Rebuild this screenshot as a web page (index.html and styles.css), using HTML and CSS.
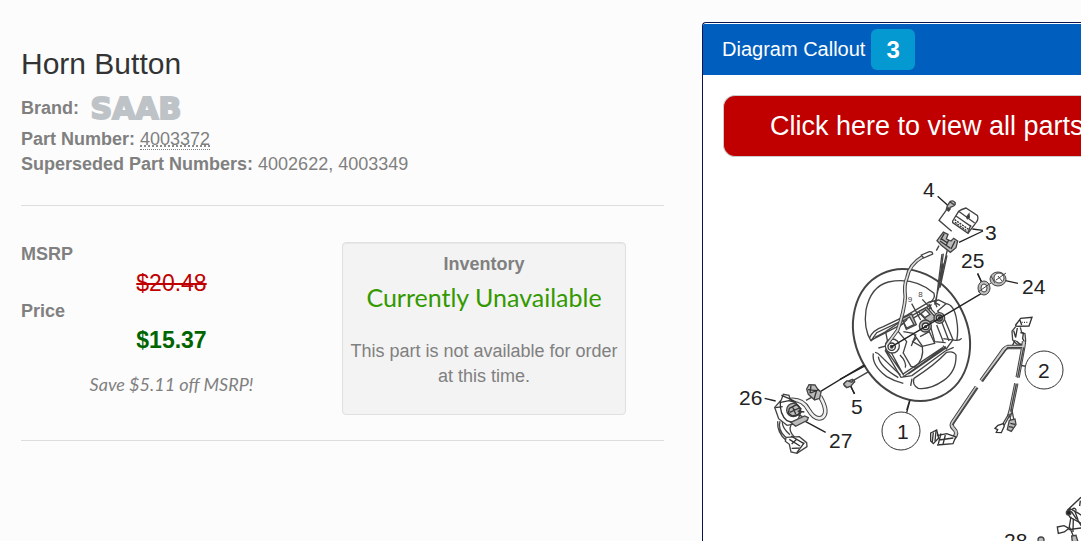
FILE: index.html
```html
<!DOCTYPE html>
<html lang="en">
<head>
    <meta charset="UTF-8">
    <meta name="viewport" content="width=device-width, initial-scale=1.0">
    <title>Horn Button - 4003372</title>
    <link rel="stylesheet" href="styles.css">
</head>
<body>
    <main class="page">
        <section class="product">
            <h1>Horn Button</h1>
            <div class="brand">
                <strong>Brand:</strong>
                <svg class="brand-logo" viewBox="0 0 98 36" role="img" aria-label="SAAB">
                    <text x="49" y="29" text-anchor="middle">SAAB</text>
                </svg>
            </div>
            <div><strong>Part Number:</strong> <abbr title="Part number">4003372</abbr></div>
            <div><strong>Superseded Part Numbers:</strong> 4002622, 4003349</div>
            <hr>
            <div class="offer">
                <div class="pricing">
                    <dl>
                        <dt>MSRP</dt>
                        <dd><del>$20.48</del></dd>
                        <dt>Price</dt>
                        <dd class="price">$15.37</dd>
                    </dl>
                    <p class="savings">Save $5.11 off MSRP!</p>
                </div>
                <div class="well">
                    <strong>Inventory</strong>
                    <div class="status">Currently Unavailable</div>
                    <p>This part is not available for order at this time.</p>
                </div>
            </div>
            <hr>
        </section>
        <section class="panel">
            <div class="panel-heading">Diagram Callout <span class="label">3</span></div>
            <div class="panel-body">
                <a class="btn" href="#diagram">Click here to view all parts</a>
                <svg class="diagram" id="diagram" viewBox="723 177 358 364" role="img" aria-label="Steering wheel parts diagram">
                    <!-- horn button, bracket and screw -->
                    <g transform="translate(900 170) scale(.3333)">
                        <path class="lead" d="M113 79L143 106M249 181L217 177M249 183L177 217M233 310L244 335M313 331L354 340"/>
                        <path d="M140 119L117 151L155 184M117 227L109 242"/>
                        <path class="grey" d="M142 107l9-13q8-4 14 3 3 7-4 11l-10 4-5 11-7-5z"/>
                        <path d="M150 96l12 8M142 112l10 6M140 116l9 5"/>
                        <path class="part" d="M158 153L176 124Q184 118 198 114L232 136Q237 148 228 158L204 190 158 158z"/>
                        <path d="M168 138l46 32M176 124l48 35M204 190l8-25"/>
                        <path class="thick" d="M164 149l43 30M165 157l38 27" stroke-dasharray="6 3"/>
                        <path class="ink" d="M200 141l7-9 1 10-6 4z"/>
                        <path class="grey" d="M111 212L130 186 144 193 139 207 153 213 161 205 173 213 168 233 151 247 124 226z"/>
                        <path class="thick" d="M122 205l21 14M120 213l31 22M133 190l-11 20M165 213l-12 24M139 225l7-15"/>
                        <path d="M130 251L115 360M141 256L120 353M130 280l-8 50"/>
                    </g>
                    <!-- steering wheel -->
                    <ellipse class="rim" cx="911.5" cy="335" rx="56" ry="68" transform="rotate(-26 911.5 335)"/>
                    <g transform="translate(840 250) scale(.3333)">
                        <path d="M93 273Q70 235 78 180Q92 110 145 96Q225 80 282 130Q287 145 270 158M93 273l10-10M318 161Q343 164 350 210Q356 245 350 273M365 265q-6 7-18 6l-37-5"/>
                        <path d="M100 310Q94 345 140 380Q165 395 190 400M105 307q8 0 16 10l60 58M115 320q4 30 60 63"/>
                        <path d="M222 385Q285 345 320 307Q340 302 348 315Q350 365 310 392Q270 420 235 415Q215 405 222 385zM216 386l-4 22"/>
                        <path d="M88 265Q98 240 130 230L200 196 268 156 296 150 318 161M93 273L110 248 205 203 275 164M98 268l110-57 66-38"/>
                        <path d="M105 262l32-17 8 41-30 8M137 245l43-29M145 286l-9 16 47 80 33-5 100-74 25-11M140 302l49 70 120-80M153 306l38 70M205 372l113-78M188 382l130-92"/>
                        <path d="M318 161l-25 22 22 28 24 58-20 28-10-10M305 215l22 58M240 260l28-15 16 35-40 10-26-15 12-12"/>
                        <path class="grey" d="M235 185l25-13 30 34-24 12zM186 205l29-13 14 32-30 14z"/>
                        <path class="part" d="M243 191l14-12 13 14-15 10zM189 213l20-12 13 23-22 10z"/>
                        <path d="M178 230l24-22M170 239l30 36-11 36M190 245l30 5 27 38q6 40-22 64l-12-3-23-40M180 315q20 20 16 38M228 253l-14 35M272 230l12 45 33 3M290 225l20 50M266 161l9 16M283 152l8 20M286 158l14 8"/>
                        <circle class="part" cx="157" cy="288" r="21"/>
                        <circle class="thick part" cx="155" cy="290" r="11"/><circle class="ink" cx="155" cy="290" r="4"/>
                        <circle class="grey" cx="256" cy="228" r="18"/>
                        <circle class="thick part" cx="257" cy="229" r="10"/><circle class="ink" cx="257" cy="230" r="3"/>
                        <circle class="grey" cx="298" cy="204" r="16"/>
                        <circle class="thick part" cx="298" cy="204" r="9"/><circle class="ink" cx="299" cy="204" r="4"/>
                        <path d="M215 161l27 49M247 148l39 43"/>
                        <path class="lead" d="M155 290L450 115M0 388L76 347M30 402l13 30M413 72l12 24"/>
                        <path d="M35 394L86 365M209 451l-9 29M322 0L284 164M306 12l-18 145"/>
                        <path class="tube" d="M248 20Q208 43 201 83Q191 105 196 140Q193 183 173 240L140 285"/>
                        <path class="tube-fill" d="M248 20Q208 43 201 83Q191 105 196 140Q193 183 173 240L140 285"/>
                        <path class="part" d="M244 15l24-10q10-1 10 7l-27 12z"/>
                        <path class="grey" d="M12 405q0-9 10-10l15-7 6 8-17 8-2 8q-8 2-12-7z"/>
                        <text class="tiny" x="203" y="157">9</text>
                        <text class="tiny" x="235" y="142">8</text>
                    </g>
                    <!-- washers 24 and 25 -->
                    <ellipse class="grey" cx="984" cy="288" rx="6" ry="7"/>
                    <ellipse class="part" cx="984" cy="288" rx="3" ry="4"/>
                    <path d="M978 292l13-9"/>
                    <ellipse class="grey" cx="998" cy="279" rx="8" ry="7"/>
                    <ellipse class="part" cx="999" cy="278" rx="5" ry="5"/>
                    <path d="M996 280l10-7M998 276l4 5M991 276l4 7"/>
                    <!-- clock spring -->
                    <g transform="translate(730 360) scale(.3333)">
                        <path class="lead" d="M272 94L402 15M104 115l33 8M226 184l61 33M361 78l13 23M530 158l10-37"/>
                        <path d="M228 121l22-12"/>
                        <path class="tube wide" d="M178 120Q217 115 235 148Q256 184 278 172Q297 155 270 109"/>
                        <path class="tube-fill wide" d="M178 120Q217 115 235 148Q256 184 278 172Q297 155 270 109"/>
                        <path class="grey" d="M230 87l7-13 18 1 8 12 10 10-4 18-15 5-19-17z"/>
                        <path class="thick" d="M234 89l26 3M242 99l25-10M243 76l-3 24M260 91l-8 27"/>
                        <path class="part" d="M134 142l20-22 6-17 17 3 4 14 15 5 17 31-14 35-28 5-25-20z"/>
                        <path class="thick" d="M136 143l22-3M151 123q-3 40 20 59l25 8M154 106l22 9 16 8M148 128l29-6 20 6"/>
                        <circle class="grey" cx="190" cy="150" r="20"/>
                        <path class="thick" d="M178 145l22-11 13 12-6 17-20 5-12-9zM187 139l10 23M179 157l29-13M203 153l20 3M203 164l15 6"/>
                        <path class="part" d="M150 184q-8 25 17 48M143 184q-2 34 25 57M183 195q-9 17 11 37l22 13M157 184q-1 21 23 40"/>
                        <path class="part" d="M168 232l40-2 22 18 1 12-30 20-18-4-5-23-12-9z"/>
                        <path class="thick" d="M183 228l39 23M178 238l32 20M185 252l15-14M200 279l23-31M185 265l27-1"/>
                        <path class="grey" d="M182 187l42-19 11 5-3 8-35 18z"/>
                        <path class="grey" d="M341 72l10-10 14 5 7-7 2 5-11 13-13 5z"/>
                    </g>
                    <!-- harness -->
                    <g transform="translate(920 300) scale(.3333)">
                        <path class="part thick" d="M287 75l15-20 34-3-9 26-39 1zM299 58l6 17"/>
                        <path class="thick" d="M305 67h20" stroke-dasharray="3 4"/>
                        <path class="part" d="M287 80l-11 14 2 26 12 12 19 1 8-10-2-22-10-4-4-15"/>
                        <path class="thick" d="M281 92l6 21M286 120l-10 19M289 123l20 17M301 98l9 2-2 16 9 16M292 84l-5 28"/>
                        <path class="cable" d="M309 141H263Q252 144 244 159L184 242M170 261L98 367Q91 378 102 387Q116 400 100 415L52 425M312 124L310 140 293 232M289 250L273 328L267 350"/>
                        <path class="cable-fill" d="M309 141H263Q252 144 244 159L184 242M170 261L98 367Q91 378 102 387Q116 400 100 415L52 425M312 124L310 140 293 232M289 250L273 328L267 350"/>
                        <path d="M307 143h-44L185 244M171 264L97 375M311 142l-18 91M289 252l-17 83"/>
                        <path class="lead" d="M306 197l13 2"/>
                        <path class="part thick" d="M32 399l18-9 6 24-16 17-8-8zM51 407l29-6 27 10-8 20-48 4"/>
                        <path class="thick" d="M40 397l-3 29M48 393l-3 30M63 400l-8 32M76 405l-7 28M57 420l43-6"/>
                        <path d="M266 342l-18 30M272 341l-19 34M275 326l7 36M269 344l4 21"/>
                        <path class="part thick" d="M250 371l-16 5-9 9 8 4-4 8 15 1 9-20z"/>
                        <path class="grey thick" d="M268 361l17-4 3 17-14 20-12-5z"/>
                        <path class="thick" d="M271 370l14 3M267 380l12 2"/>
                    </g>
                    <circle class="callout" cx="901" cy="431" r="19"/>
                    <circle class="callout" cx="1044" cy="370" r="19"/>
                    <!-- next assembly, cut off at the bottom -->
                    <g transform="translate(990 480) scale(.3333)">
                        <path class="part thick" d="M232 91L273 52M230 97l12-10 20 11 13 8M231 97l9 15 34 18M247 88q8-8 12 4"/>
                        <circle class="ink" cx="236" cy="98" r="7"/>
                        <path class="thick" d="M244 94l16 24M254 92l10 27M243 110l-5 30 15 35M250 116l-1 40M262 118l12 20M236 145l-14-4M236 149l37-5M271 62l-2 16"/>
                        <path class="part thick" d="M202 141l20-4 15 8-14 11-18 4z"/>
                        <path class="grey thick" d="M245 168l13-2 6 20h-17z"/>
                        <circle class="grey" cx="153" cy="180" r="9"/>
                    </g>
                    <g class="numbers">
                        <text x="923" y="197">4</text>
                        <text x="985" y="240">3</text>
                        <text x="961" y="268">25</text>
                        <text x="1022" y="294">24</text>
                        <text x="739" y="405">26</text>
                        <text x="851" y="414">5</text>
                        <text x="829" y="448">27</text>
                        <text x="897" y="439">1</text>
                        <text x="1038" y="378">2</text>
                        <text x="1004" y="548">28</text>
                    </g>
                </svg>
            </div>
        </section>
    </main>
</body>
</html>
```
FILE: styles.css
```css
* {
    box-sizing: border-box;
}
body {
    margin: 0;
    background-color: #fcfcfc;
    color: #808080;
    font-family: Arial, "Liberation Sans", sans-serif;
    font-size: 18px;
    line-height: 25px;
    overflow: hidden;
}
.page {
    display: grid;
    grid-template-columns: minmax(0, 702fr) minmax(0, 379fr);
    height: 100vh;
    padding-top: 22px;
}
.product {
    padding: 22px 38px 0 21px;
}
h1 {
    margin: 0 0 12px;
    color: #333;
    font-size: 30px;
    font-weight: normal;
    line-height: 40px;
}
.brand {
    display: flex;
    align-items: center;
    gap: 8px;
    height: 24px;
    margin-bottom: 7px;
}
.brand-logo {
    width: 98px;
    height: 36px;
}
.brand-logo text {
    fill: #bec3c7;
    stroke: #bec3c7;
    stroke-width: 2px;
    font-family: "DejaVu Sans", sans-serif;
    font-size: 30px;
    font-weight: bold;
}
abbr {
    border-bottom: 1px dotted #808080;
    text-decoration: underline dotted;
}
hr {
    height: 1px;
    margin: 28px 0 36px;
    border: 0;
    background-color: #ddd;
}
.offer {
    display: grid;
    grid-template-columns: 301fr 284fr;
    column-gap: 20px;
    padding-right: 38px;
    margin-bottom: -3px;
}
dl {
    margin: 0;
}
dt {
    font-weight: bold;
}
dd {
    margin: 0;
    color: #c00000;
    font-size: 23px;
    line-height: 32px;
    text-align: center;
}
.price {
    color: #006400;
    font-weight: bold;
}
.savings {
    margin: 16px 0 0;
    font-family: "Gill Sans", Lato, sans-serif;
    font-style: italic;
    text-align: center;
}
.well {
    padding: 9px 6px 25px;
    border: 1px solid #e0e0e0;
    border-radius: 4px;
    background-color: #f3f3f3;
    box-shadow: inset 0 1px 1px rgba(0,0,0,0.05);
    text-align: center;
}
.well p {
    margin: 22px 0 0;
}
.status {
    color: #339900;
    font-family: "Gill Sans", Lato, sans-serif;
    font-size: 25px;
    line-height: 40px;
}
.panel {
    padding-top: 1px;
    border: 1px solid #0a1550;
    border-width: 1px 0 0 1px;
    border-top-left-radius: 4px;
    background-color: #fff;
    overflow: hidden;
}
.panel-heading {
    display: flex;
    align-items: center;
    gap: 6px;
    height: 51px;
    padding-left: 19px;
    background-color: #005ebe;
    color: #fff;
    font-size: 20px;
}
.label {
    padding: 0 15px;
    border-radius: 6px;
    background-color: #0499d0;
    font-size: 24px;
    font-weight: bold;
    line-height: 41px;
}
.panel-body {
    padding: 20px 0 0 20px;
}
.btn {
    display: block;
    margin-bottom: 20px;
    padding: 10px 0 10px 46px;
    border: 1px solid #ccc;
    border-right: 0;
    border-radius: 12px 0 0 12px;
    background-color: #c00000;
    color: #fff;
    font-size: 27px;
    line-height: 40px;
    text-decoration: none;
    white-space: nowrap;
    overflow: hidden;
}

/* diagram */
.diagram {
    display: block;
    width: 100%;
    fill: none;
    stroke: #444;
    stroke-width: 1px;
}
.diagram g {
    stroke-width: 4px;
}
.diagram .rim {
    stroke: #444;
    stroke-width: 2px;
}
.diagram .lead {
    stroke: #222;
    stroke-width: 4px;
}
.diagram .thick {
    stroke: #333;
    stroke-width: 4px;
}
.diagram .part {
    fill: #fff;
}
.diagram .grey {
    fill: #bbb;
    stroke: #444;
}
.diagram .ink {
    fill: #222;
}
.diagram .tube {
    stroke-width: 11px;
}
.diagram .tube-fill {
    stroke: #ddd;
    stroke-width: 5px;
}
.diagram .tube.wide {
    stroke-width: 14px;
}
.diagram .tube-fill.wide {
    stroke: #eee;
    stroke-width: 8px;
}
.diagram .cable {
    stroke-width: 13px;
}
.diagram .cable-fill {
    stroke: #ccc;
    stroke-width: 7px;
}
.diagram .callout {
    stroke: #333;
    fill: #fff;
}
.diagram .tiny {
    fill: #444;
    stroke: none;
    font-size: 24px;
}
.diagram .numbers {
    fill: #222;
    stroke: none;
    font-size: 21px;
}
```
